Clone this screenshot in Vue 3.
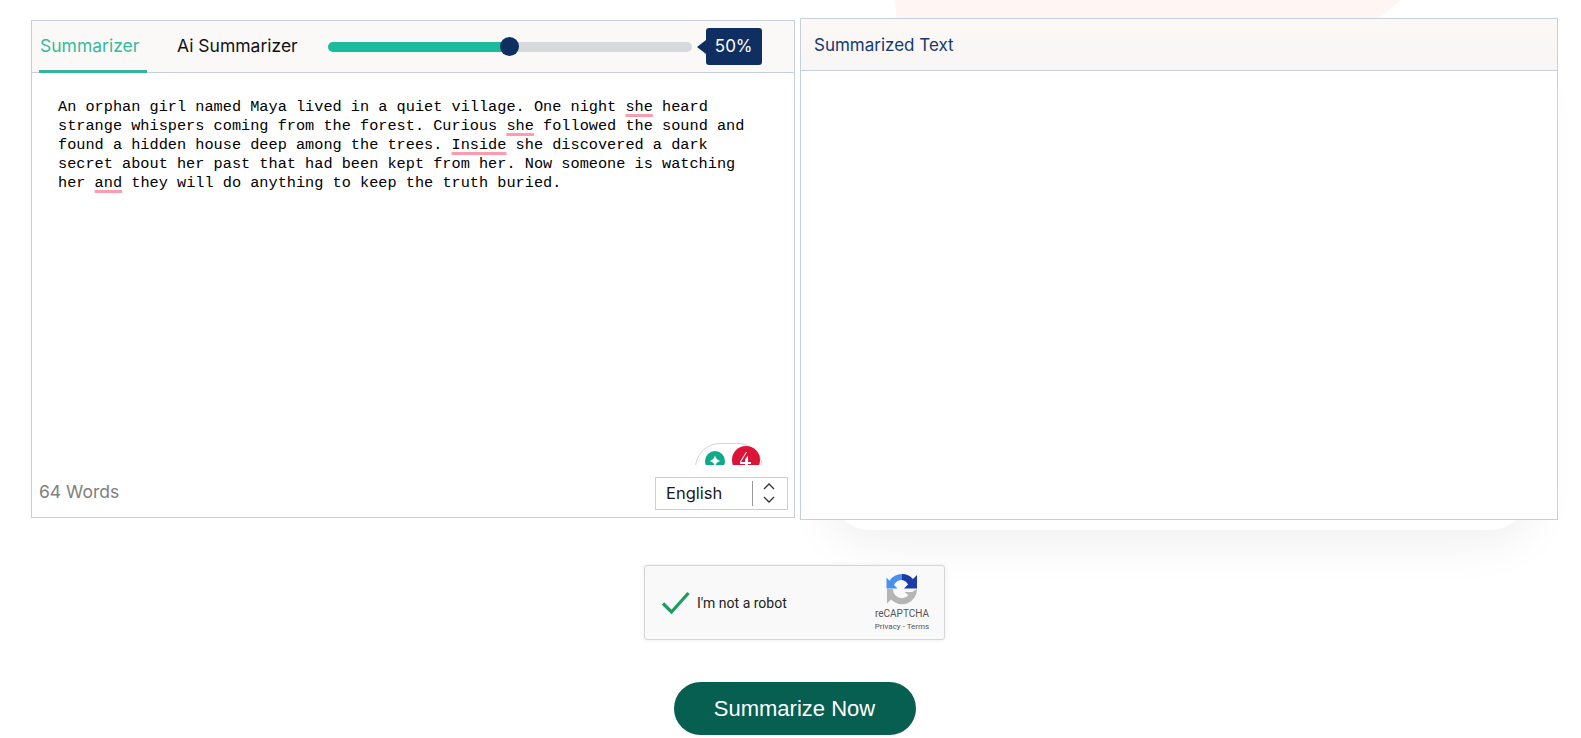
<script setup>
const percent = 50
</script>

<template>
  <div class="page">
    <div class="decor-pink"></div>
    <div class="decor-shadow"></div>
    <div class="panels">
      <section class="panel left">
        <header class="head">
          <div class="tab active">Summarizer</div>
          <div class="tab">Ai Summarizer</div>
          <div class="slider">
            <div class="track">
              <div class="fill" :style="{ width: percent + '%' }"></div>
              <div class="thumb" :style="{ left: percent + '%' }"></div>
            </div>
            <div class="tip">{{ percent }}%</div>
          </div>
        </header>
        <div class="body">
          <p class="text">An orphan girl named Maya lived in a quiet village. One night <span class="mark">she</span> heard<br />strange whispers coming from the forest. Curious <span class="mark">she</span> followed the sound and<br />found a hidden house deep among the trees. <span class="mark">Inside</span> she discovered a dark<br />secret about her past that had been kept from her. Now someone is watching<br />her <span class="mark">and</span> they will do anything to keep the truth buried.</p>
          <div class="pill">
            <span class="dot green">
              <svg width="12" height="12" viewBox="0 0 12 12"><path d="M6 0.5C6.8 3.6 8.4 5.2 11.5 6C8.4 6.8 6.8 8.4 6 11.5C5.2 8.4 3.6 6.8 0.5 6C3.6 5.2 5.2 3.6 6 0.5Z" fill="#fff" /></svg>
            </span>
            <span class="dot red">
              <svg width="16" height="20" viewBox="0 0 16 20"><path d="M9 2L3 12H7V9.5L10 5.5V12H13V14H10V18H7V14H2V11.5L8 2Z" fill="#fff" /></svg>
            </span>
          </div>
        </div>
        <footer class="foot">
          <span class="count">64 Words</span>
          <div class="lang">
            <span class="lang-name">English</span>
            <span class="lang-sep"></span>
            <svg class="chev" width="14" height="24" viewBox="0 0 14 24" fill="none" stroke="#333" stroke-width="1.3">
              <path d="M2 8L7 3L12 8" />
              <path d="M2 16L7 21L12 16" />
            </svg>
          </div>
        </footer>
      </section>

      <section class="panel right">
        <header class="head right-head">Summarized Text</header>
        <div class="right-body"></div>
      </section>
    </div>

    <div class="captcha">
      <svg class="check" width="30" height="24" viewBox="0 0 30 24" fill="none"><path d="M2 12.5L10.5 21L27.5 2" stroke="#1a9e5c" stroke-width="3.2" /></svg>
      <span class="robot">I'm not a robot</span>
      <div class="brand">
        <svg width="32" height="32" viewBox="0 0 32 32">
          <path d="M16 1A15 15 0 0 0 3.5 7.7L0.5 4.5V15.5H11.5L8 12A9 9 0 0 1 16 7L19 4Z" fill="#4a90f2" />
          <path d="M16 1A15 15 0 0 1 27 6L31 2V15.5H18L22 11.5A9 9 0 0 0 16 7Z" fill="#1c3aa8" />
          <path d="M1 16H7A9 9 0 0 0 22.5 22.3L18.5 19H26L31 16A15 15 0 0 1 5 26.5L1 30.5Z" fill="#b5b5b5" />
        </svg>
        <span class="brand-name">reCAPTCHA</span>
        <span class="brand-links">Privacy - Terms</span>
      </div>
    </div>

    <button class="go">Summarize Now</button>
  </div>
</template>

<style>
html, body { margin: 0; background: #fff; overflow: hidden; }
</style>

<style scoped>
.page {
  position: relative;
  height: 738px;
  overflow: hidden;
  background: #fff;
  display: flex;
  flex-direction: column;
  align-items: center;
  box-sizing: border-box;
  padding: 18px 23px 0 31px;
}
.decor-pink {
  position: absolute;
  left: 800px;
  top: -330px;
  width: 660px;
  height: 420px;
  border-radius: 50%;
  background: #fff3f1;
  opacity: .85;
  clip-path: polygon(8% 0, 100% 0, 100% 80%, 50% 100%, 16% 100%);
}
.decor-shadow {
  position: absolute;
  left: 830px;
  top: 60px;
  width: 700px;
  height: 470px;
  border-radius: 40px;
  background: #fff;
  box-shadow: 0 10px 50px rgba(0, 0, 0, .07);
}
.panels {
  position: relative;
  align-self: stretch;
  display: flex;
  align-items: flex-start;
  gap: 5px;
}
.panel {
  box-sizing: border-box;
  border: 1px solid #c6cee0;
  display: flex;
  flex-direction: column;
}
.left {
  width: 764px;
  height: 498px;
  margin-top: 2px;
  position: relative;
}
.right {
  flex: 1;
  height: 502px;
}
.head {
  display: flex;
  box-sizing: border-box;
  border-bottom: 1px solid #c6cee0;
  background: #fbf9f7;
}
.left .head {
  height: 52px;
  align-items: stretch;
  padding-left: 7px;
}
.tab {
  font-family: Inter, sans-serif;
  font-size: 17.5px;
  line-height: 50px;
  color: #111;
  height: 52px;
  box-sizing: border-box;
}
.tab.active {
  width: 108px;
  padding-left: 1px;
  color: #35b9a0;
  border-bottom: 3px solid #35b39c;
  margin-right: 30px;
  white-space: nowrap;
}
.slider {
  display: flex;
  align-items: flex-start;
  margin-left: 30px;
  position: relative;
}
.track {
  position: relative;
  width: 364px;
  height: 10px;
  margin-top: 21px;
  border-radius: 5px;
  background: #d6dadd;
}
.fill {
  height: 10px;
  border-radius: 5px;
  background: #1abc9c;
}
.thumb {
  position: absolute;
  top: -5px;
  width: 19px;
  height: 19px;
  margin-left: -9.5px;
  border-radius: 50%;
  background: #0f2f62;
}
.tip {
  position: relative;
  margin: 7px 0 0 14px;
  width: 56px;
  height: 37px;
  border-radius: 3px;
  background: #0f2f62;
  color: #fff;
  font-family: Inter, sans-serif;
  font-size: 17px;
  line-height: 37px;
  text-align: center;
}
.tip::before {
  content: "";
  position: absolute;
  left: -9px;
  top: 12px;
  border-style: solid;
  border-width: 7px 9px 7px 0;
  border-color: transparent #0f2f62 transparent transparent;
}
.body {
  flex: 1;
  position: relative;
  overflow: hidden;
}
.text {
  margin: 0;
  padding: 25px 0 0 26px;
  font-family: "Liberation Mono", monospace;
  font-size: 15.25px;
  line-height: 19px;
  color: #000;
  white-space: nowrap;
}
.mark {
  text-decoration: underline;
  text-decoration-color: #ff9bb0;
  text-decoration-thickness: 3px;
  text-underline-offset: 3px;
  text-decoration-skip-ink: none;
}
.pill {
  position: absolute;
  left: 663px;
  top: 370px;
  width: 68px;
  height: 50px;
  box-sizing: border-box;
  border: 1px solid #cfd4e2;
  border-radius: 26px;
  background: #fff;
}
.dot {
  position: absolute;
  display: flex;
  align-items: center;
  justify-content: center;
  border-radius: 50%;
}
.green {
  left: 9px;
  top: 7px;
  width: 20px;
  height: 20px;
  background: #0fa98c;
}
.red {
  left: 36px;
  top: 2px;
  width: 28px;
  height: 28px;
  background: #dc1438;
}
.foot {
  height: 52px;
  display: flex;
  align-items: center;
  justify-content: space-between;
  background: #fff;
  box-sizing: border-box;
  padding: 0 6px 0 7px;
  position: relative;
}
.count {
  font-family: Inter, sans-serif;
  font-size: 17.5px;
  color: #808080;
}
.lang {
  width: 133px;
  height: 33px;
  box-sizing: border-box;
  border: 1px solid #cfcfcf;
  display: flex;
  align-items: center;
  padding-left: 10px;
  margin-top: 4px;
  background: #fff;
}
.lang-name {
  flex: 1;
  font-family: Inter, sans-serif;
  font-size: 16.5px;
  color: #1a1a1a;
}
.lang-sep {
  width: 1px;
  height: 25px;
  background: #999;
}
.chev {
  margin: 0 11px 0 9px;
}
.right-head {
  height: 52px;
  align-items: center;
  padding-left: 13px;
  font-family: Inter, sans-serif;
  font-size: 17px;
  color: #153a6b;
  background: linear-gradient(180deg, #fbf8f6 0%, #f8f6f4 100%);
}
.right-body {
  flex: 1;
  background: #fff;
}
.captcha {
  position: relative;
  margin-top: 45px;
  width: 301px;
  height: 75px;
  box-sizing: border-box;
  border: 1px solid #d6d6d6;
  border-radius: 3px;
  background: #f9f9f9;
  box-shadow: 0 0 4px rgba(0, 0, 0, .08);
  display: flex;
  align-items: center;
  padding-left: 16px;
}
.check { flex: none; }
.robot {
  margin-left: 6px;
  font-family: Roboto, sans-serif;
  font-size: 14px;
  color: #222;
}
.brand {
  margin-left: auto;
  width: 72px;
  margin-right: 6px;
  display: flex;
  flex-direction: column;
  align-items: center;
  font-family: Roboto, sans-serif;
  color: #555;
}
.brand-name {
  margin-top: 3px;
  font-size: 10px;
  line-height: 12px;
}
.brand-links {
  margin-top: 2px;
  font-size: 8px;
  line-height: 10px;
}
.go {
  position: relative;
  margin-top: 42px;
  width: 242px;
  height: 53px;
  border: 0;
  border-radius: 27px;
  background: #065f50;
  color: #fff;
  font-family: "Liberation Sans", Arial, sans-serif;
  font-size: 22px;
}
</style>
